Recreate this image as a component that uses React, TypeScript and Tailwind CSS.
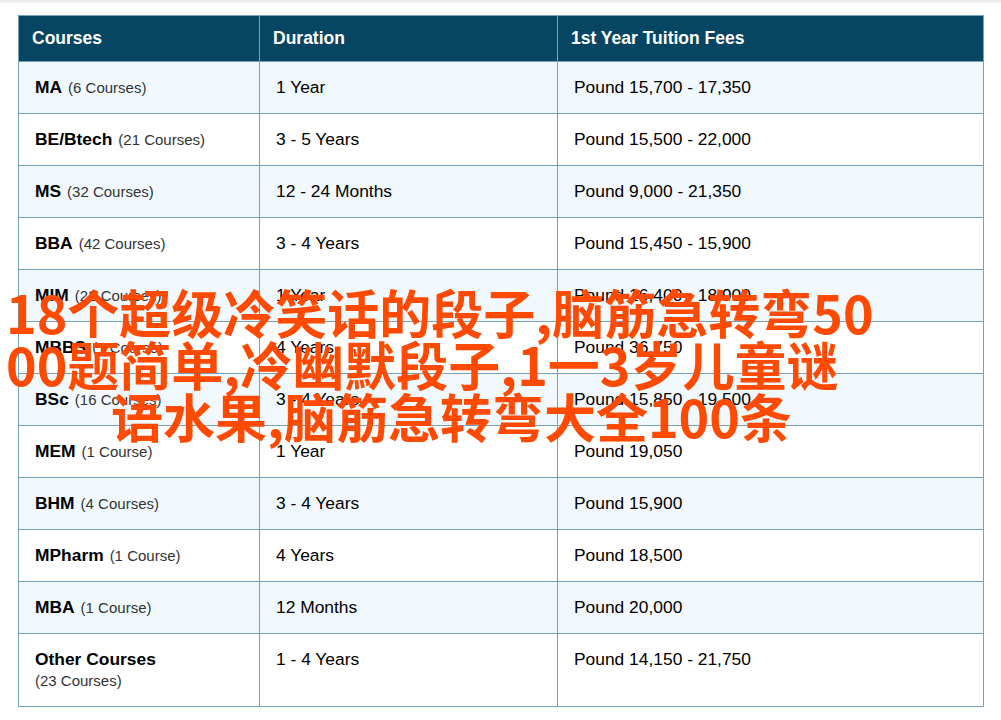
const rows = [
  { name: 'MA', count: '(6 Courses)', duration: '1 Year', fees: 'Pound 15,700 - 17,350' },
  { name: 'BE/Btech', count: '(21 Courses)', duration: '3 - 5 Years', fees: 'Pound 15,500 - 22,000' },
  { name: 'MS', count: '(32 Courses)', duration: '12 - 24 Months', fees: 'Pound 9,000 - 21,350' },
  { name: 'BBA', count: '(42 Courses)', duration: '3 - 4 Years', fees: 'Pound 15,450 - 15,900' },
  { name: 'MIM', count: '(22 Courses)', duration: '1 Year', fees: 'Pound 16,400 - 18,900' },
  { name: 'MBBS', count: '(1 Course)', duration: '4 Years', fees: 'Pound 36,750' },
  { name: 'BSc', count: '(16 Courses)', duration: '3 - 4 Years', fees: 'Pound 15,850 - 19,500' },
  { name: 'MEM', count: '(1 Course)', duration: '1 Year', fees: 'Pound 19,050' },
  { name: 'BHM', count: '(4 Courses)', duration: '3 - 4 Years', fees: 'Pound 15,900' },
  { name: 'MPharm', count: '(1 Course)', duration: '4 Years', fees: 'Pound 18,500' },
  { name: 'MBA', count: '(1 Course)', duration: '12 Months', fees: 'Pound 20,000' },
];

export default function App() {
  return (
    <div className="relative h-[720px] w-[1001px] overflow-hidden bg-white pt-[15px] pl-[18px] font-['Liberation_Sans',Arial,sans-serif] text-black">
      <div className="absolute inset-x-0 top-0 h-[4px] bg-gradient-to-b from-[#e4e4e4] to-white" />

      <table className="w-[965px] table-fixed border-collapse text-[17.4px] leading-[22px]">
        <colgroup>
          <col className="w-[241px]" />
          <col className="w-[298px]" />
          <col className="w-[426px]" />
        </colgroup>
        <thead>
          <tr className="h-[46px] bg-[#064663] text-left text-[17.5px] font-bold text-white">
            <th className="border border-[#76a3bb] pb-[2px] pl-[13px]">Courses</th>
            <th className="border border-[#76a3bb] pb-[2px] pl-[13px]">Duration</th>
            <th className="border border-[#76a3bb] pb-[2px] pl-[13px]">1st Year Tuition Fees</th>
          </tr>
        </thead>
        <tbody>
          {rows.map((row, i) => (
            <tr key={row.name} className={i % 2 === 0 ? 'h-[52px] bg-[#f1f9ff]' : 'h-[52px] bg-white'}>
              <td className="border border-[#76a3bb] pl-4">
                <b className="font-bold">{row.name}</b>
                <span className="ml-[6px] text-[15px] text-[#333]">{row.count}</span>
              </td>
              <td className="border border-[#76a3bb] pb-[2px] pl-4">{row.duration}</td>
              <td className="border border-[#76a3bb] pb-[2px] pl-4">{row.fees}</td>
            </tr>
          ))}
          <tr className="h-[73px] bg-white align-top">
            <td className="border border-[#76a3bb] pt-[14px] pl-4">
              <b className="block font-bold">Other Courses</b>
              <span className="block text-[15px] text-[#333]">(23 Courses)</span>
            </td>
            <td className="border border-[#76a3bb] pt-[14px] pl-4">1 - 4 Years</td>
            <td className="border border-[#76a3bb] pt-[14px] pl-4">Pound 14,150 - 21,750</td>
          </tr>
        </tbody>
      </table>

      {/* title sits over the table */}
      <h1 className="absolute top-[286px] left-[6px] w-[891px] font-['Noto_Sans_CJK_SC',sans-serif] text-[52px] leading-[52px] font-bold text-[#ff4a00]">
        <span className="block">18个超级冷笑话的段子,脑筋急转弯50</span>
        <span className="block">00题简单,冷幽默段子,1一3岁儿童谜</span>
        <span className="block text-center">语水果,脑筋急转弯大全100条</span>
      </h1>
    </div>
  );
}
